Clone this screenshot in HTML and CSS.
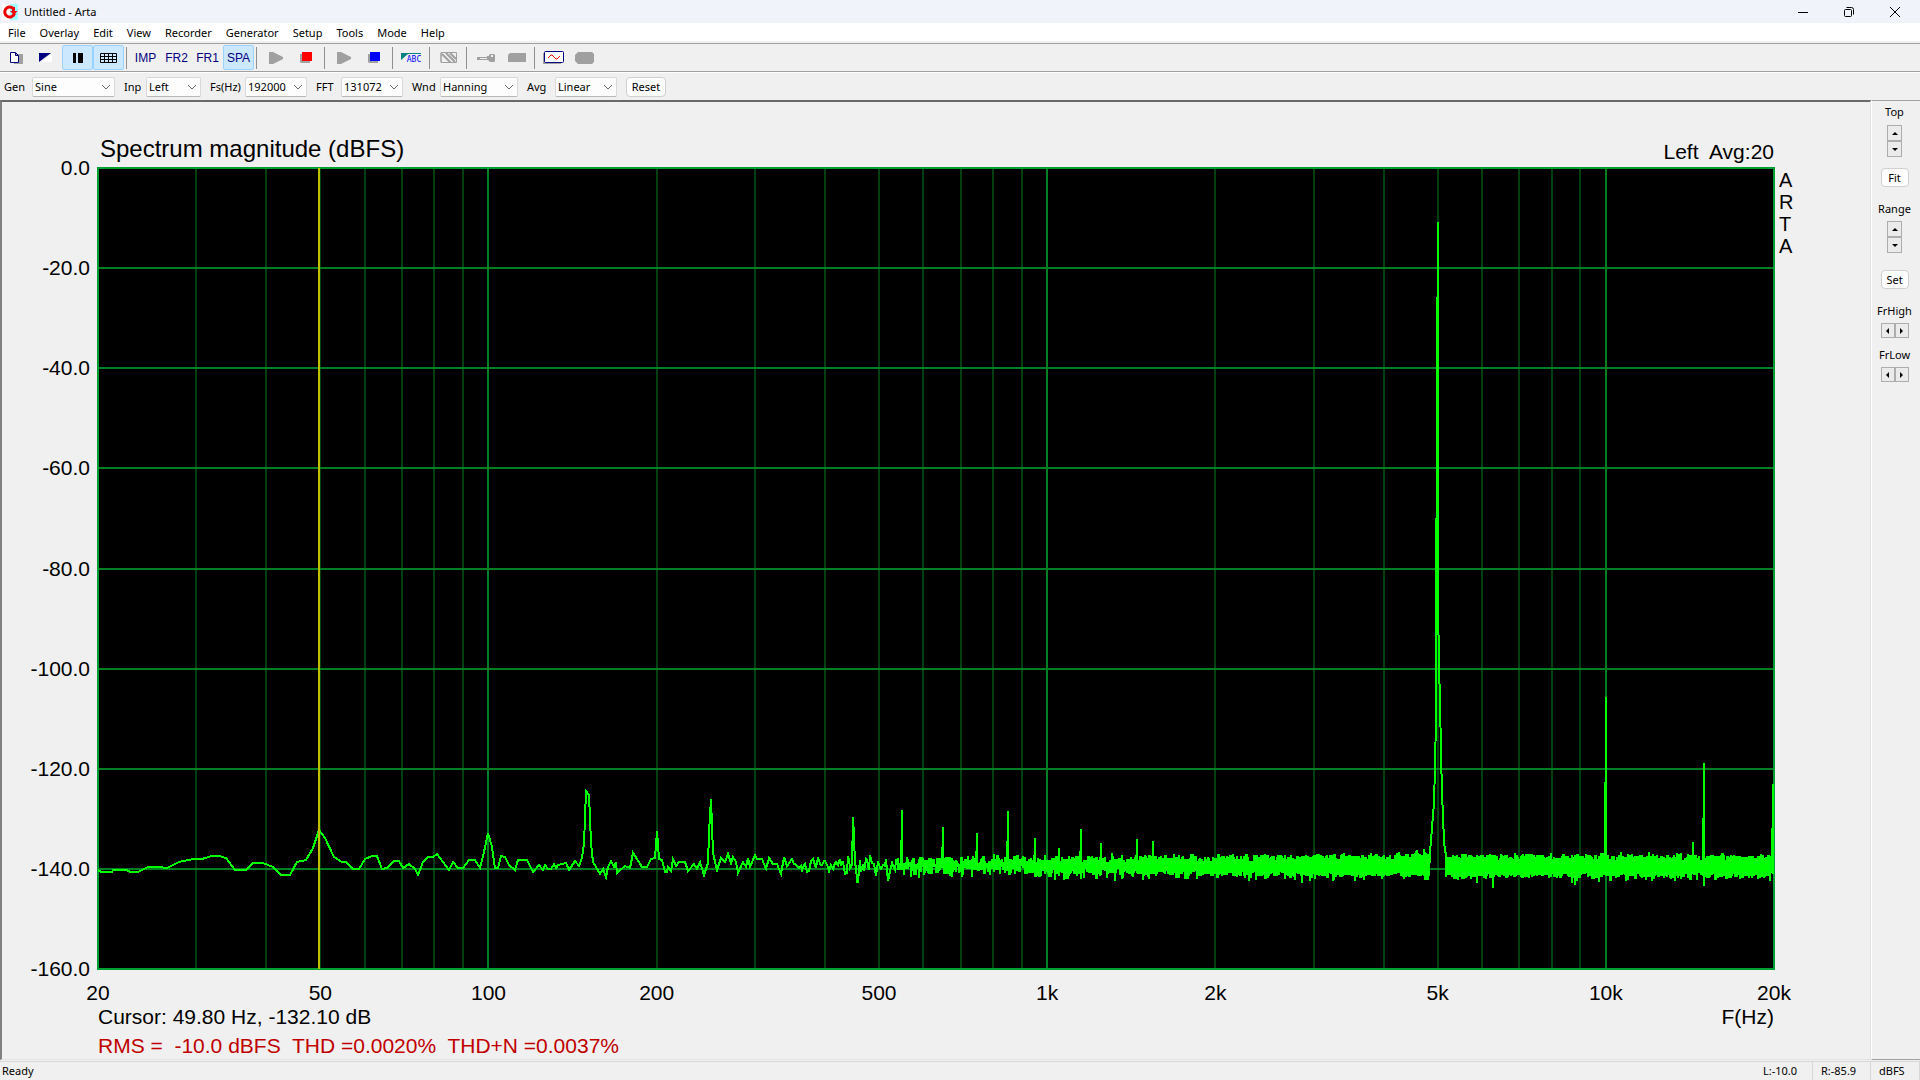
FILE: index.html
```html
<!DOCTYPE html>
<html lang="en">
<head>
<meta charset="utf-8">
<title>Untitled - Arta</title>
<link rel="stylesheet" href="styles.css">
</head>
<body>
<div class="window">
  <header class="titlebar">
    <svg class="app-icon" width="16" height="16" viewBox="0 0 16 16"><path fill="#fff" d="M0 0h8v16H0z"/><path fill="#a0ffff" d="M8 0h8v16H8z"/><path fill="none" stroke="#f00000" stroke-width="3" d="M11 4.200A5 5 0 1 0 12.500 9.500"/><path fill="#f00000" d="M8 7h7.500L12 11zM10 3h3v5h-3z"/></svg>
    <h1 class="app-title">Untitled - Arta</h1>
    <div class="window-buttons">
      <button type="button" aria-label="Minimize"><svg width="10" height="10" viewBox="0 0 10 10"><path d="M0 5.500h10"/></svg></button>
      <button type="button" aria-label="Restore"><svg width="10" height="10" viewBox="0 0 10 10"><rect x=".5" y="2.500" width="7" height="7" rx="1"/><path d="M2.500.5H7.500a2 2 0 0 1 2 2V7.500"/></svg></button>
      <button type="button" aria-label="Close"><svg width="10" height="10" viewBox="0 0 10 10"><path d="M0 0l10 10M10 0L0 10"/></svg></button>
    </div>
  </header>

  <nav class="menubar">
    <a href="#">File</a><a href="#">Overlay</a><a href="#">Edit</a><a href="#">View</a><a href="#">Recorder</a><a href="#">Generator</a><a href="#">Setup</a><a href="#">Tools</a><a href="#">Mode</a><a href="#">Help</a>
  </nav>

  <div class="toolbar" role="toolbar">
    <button type="button" aria-label="New"><svg width="14" height="14" viewBox="0 0 14 14"><path fill="#a0a0a0" d="M5 3h9v10H5z"/><path fill="#fff" stroke="#000080" d="M1.500 1.500h5l3 3v7h-8zM6.500 1.500v3h3"/></svg></button>
    <button type="button" aria-label="Overlay"><svg width="16" height="10" viewBox="0 0 16 10"><path fill="#fff" d="M13 0v9H3z"/><path fill="#000080" d="M0 0h12L0 9z"/></svg></button>
    <button type="button" class="on" aria-label="Pause"><svg width="12" height="10" viewBox="0 0 12 10"><path d="M1 0h3v10H1zM6 0h5v10H6z"/></svg></button>
    <button type="button" class="on" aria-label="Grid"><svg width="17" height="10" viewBox="0 0 17 10"><path fill="none" stroke="#000" d="M.5.5h16v9H.5zM0 3.500h17M0 6.500h17M4.500 0v10M8.500 0v10M12.500 0v10"/></svg></button>
    <span class="sep"></span>
    <button type="button">IMP</button>
    <button type="button">FR2</button>
    <button type="button">FR1</button>
    <button type="button" class="on">SPA</button>
    <span class="sep"></span>
    <button type="button" aria-label="Record"><svg width="14" height="12" viewBox="0 0 14 12"><path fill="#a0a0a0" d="M0 0h4l10 5v2L4 12H0z"/></svg></button>
    <button type="button" aria-label="Stop"><svg width="13" height="11" viewBox="0 0 13 11"><path fill="#a0a0a0" d="M0 2h10v9H1L0 10z"/><path fill="#f00" d="M2 0h10v9H2z"/></svg></button>
    <span class="sep"></span>
    <button type="button" aria-label="Generator start"><svg width="14" height="12" viewBox="0 0 14 12"><path fill="#a0a0a0" d="M0 0h4l10 5v2L4 12H0z"/></svg></button>
    <button type="button" aria-label="Generator stop"><svg width="13" height="11" viewBox="0 0 13 11"><path fill="#a0a0a0" d="M0 2h10v9H1L0 10z"/><path fill="#00f" d="M2 0h10v9H2z"/></svg></button>
    <span class="sep"></span>
    <button type="button" class="abc" aria-label="Title text"><svg width="21" height="12" viewBox="0 0 21 12"><path fill="#008080" d="M0 1h20v1H7L0 8z"/></svg><span>ABC</span></button>
    <span class="sep"></span>
    <button type="button" aria-label="Hatch"><svg width="17" height="11" viewBox="0 0 17 11"><path fill="none" stroke="#a0a0a0" d="M1 .5h15.500v10H1zM1 1v9"/><path fill="none" stroke="#a0a0a0" stroke-width="2" d="M2 2l9 9M6 1l9 9M10 1l6 6"/></svg></button>
    <span class="sep"></span>
    <button type="button" aria-label="Calibration"><svg width="18" height="8" viewBox="0 0 18 8"><path fill="#a0a0a0" d="M0 3h10V2h2V1l1-1h4l1 1v6l-1 1h-4L11 6H0z"/><path fill="#f0f0f0" d="M3 4h7v1H3zM14 1h2v2h-2z"/></svg></button>
    <button type="button" aria-label="Setup"><svg width="18" height="9" viewBox="0 0 18 9"><path fill="#a0a0a0" d="M2 0h16v9H0V2z"/></svg></button>
    <span class="sep"></span>
    <button type="button" aria-label="Generator setup"><svg width="21" height="13" viewBox="0 0 21 13"><path fill="#a0a0a0" d="M0 2h18v11H0z"/><rect x="1.500" y=".5" width="19" height="11" rx="1" fill="#fff" stroke="#000080"/><path fill="none" stroke="#f00" d="M5 7l3-3h1l4 4h1l3-3"/></svg></button>
    <button type="button" aria-label="Spectrum setup"><svg width="19" height="12" viewBox="0 0 19 12"><path fill="#a0a0a0" d="M3 0h14l2 2v8l-2 2H3l-3-3V3z"/></svg></button>
  </div>

  <form class="params">
    <label class="w28" for="gen">Gen</label><select id="gen" class="sel-l"><option>Sine</option></select>
    <label class="w22" for="inp">Inp</label><select id="inp" class="sel-s"><option>Left</option></select>
    <label class="w35" for="fs">Fs(Hz)</label><select id="fs" class="sel-m"><option>192000</option></select>
    <label class="w25" for="fft">FFT</label><select id="fft" class="sel-m"><option>131072</option></select>
    <label class="w28" for="wnd">Wnd</label><select id="wnd" class="sel-w"><option>Hanning</option></select>
    <label class="w28" for="avg">Avg</label><select id="avg" class="sel-m"><option>Linear</option></select>
    <button type="button" class="push">Reset</button>
  </form>

  <div class="body">
    <main class="pane">
      <div class="plot-head"><h2>Spectrum magnitude (dBFS)</h2><span>Left&nbsp; Avg:20</span></div>
      <div class="plot-y"><span>0.0</span><span>-20.0</span><span>-40.0</span><span>-60.0</span><span>-80.0</span><span>-100.0</span><span>-120.0</span><span>-140.0</span><span>-160.0</span></div>
      <svg class="plot" viewBox="0 0 1676 801" preserveAspectRatio="none" role="img" aria-label="Spectrum magnitude">
        <path id="minor" class="minor"/>
        <path id="major" class="major"/>
        <rect class="frame" x="0" y="0" width="1676" height="801"/>
        <path id="trace" class="trace"/>
        <path class="cursor" d="M221 0V801"/>
      </svg>
      <div class="plot-brand"><span>A</span><span>R</span><span>T</span><span>A</span></div>
      <div class="plot-x"><span>20</span><span>50</span><span>100</span><span>200</span><span>500</span><span>1k</span><span>2k</span><span>5k</span><span>10k</span><span>20k</span></div>
      <div class="plot-foot">
        <div class="readout"><span>Cursor: 49.80 Hz, -132.10 dB</span><span>F(Hz)</span></div>
        <div class="thd">RMS =&nbsp; -10.0 dBFS&nbsp; THD =0.0020%&nbsp; THD+N =0.0037%</div>
      </div>
    </main>

    <aside class="side">
      <div class="side-label">Top</div>
      <div class="spin"><button type="button" aria-label="Top up"><i class="up"></i></button><button type="button" aria-label="Top down"><i class="down"></i></button></div>
      <button type="button" class="push small">Fit</button>
      <div class="side-label">Range</div>
      <div class="spin range"><button type="button" aria-label="Range up"><i class="up"></i></button><button type="button" aria-label="Range down"><i class="down"></i></button></div>
      <button type="button" class="push small">Set</button>
      <div class="side-label">FrHigh</div>
      <div class="spin row"><button type="button" aria-label="High left"><i class="left"></i></button><button type="button" aria-label="High right"><i class="right"></i></button></div>
      <div class="side-label">FrLow</div>
      <div class="spin row"><button type="button" aria-label="Low left"><i class="left"></i></button><button type="button" aria-label="Low right"><i class="right"></i></button></div>
    </aside>
  </div>

  <footer class="status"><span class="ready">Ready</span><span class="cell">L:-10.0</span><span class="cell">R:-85.9</span><span class="cell unit">dBFS</span></footer>
</div>
<script src="plot.js"></script>
</body>
</html>
```
FILE: styles.css
```css
* { box-sizing: border-box; }
body { margin: 0; font: 11px/16px "Noto Sans", sans-serif; color: #000; background: #f0f0f0; }
h1, h2 { margin: 0; font-weight: 400; }
button { padding: 0; font: inherit; color: inherit; }

.window { display: flex; flex-direction: column; height: 100vh; }

.titlebar { display: flex; align-items: center; height: 23px; padding: 0 2px; background: #f0f3f9; }
.app-title { margin-left: 6px; font: 11px/16px "Noto Sans", sans-serif; }
.window-buttons { display: flex; margin-left: auto; }
.window-buttons button { display: flex; align-items: center; justify-content: center; width: 46px; height: 20px; border: 0; background: none; }
.window-buttons svg { fill: none; stroke: #000; overflow: visible; }

.menubar { display: flex; gap: 14px; height: 18px; padding-left: 8px; background: #fff; line-height: 20px; }
.menubar a { color: #000; text-decoration: none; }

.toolbar { display: flex; align-items: center; height: 31px; padding-top: 2px; border-top: 1px solid #f0f0f0; border-bottom: 1px solid #a0a0a0; background: linear-gradient(#a0a0a0, #a0a0a0) 0 1px / 100% 1px no-repeat; }
.toolbar button { display: flex; align-items: center; justify-content: center; width: 31px; height: 25px; border: 1px solid transparent; border-radius: 2px; background: none; color: #000080; font: 12px/16px "Liberation Sans", sans-serif; }
.toolbar .on { background: #cce8ff; border-color: #99d1ff; }
.sep { width: 6px; height: 22px; background: linear-gradient(#909090, #909090) 2px 0 / 1px 100% no-repeat; }
.toolbar .abc { display: grid; place-content: center; }
.abc svg, .abc span { grid-area: 1 / 1; }
.abc span { padding: 3px 0 0 5px; color: #00f; font: 8px/9px "DejaVu Sans Mono", monospace; }

.params { display: flex; align-items: center; height: 28px; padding: 0 0 0 4px; border-top: 1px solid #fff; }
.params select { height: 20px; margin-right: 9px; padding: 0 0 0 2px; font: 11px/16px "Noto Sans", sans-serif; color: #000; appearance: none; border: 1px solid #d8d8d8; border-bottom-color: #b8b8b8; border-radius: 2px; background: #fdfdfd url("data:image/svg+xml,%3Csvg xmlns='http://www.w3.org/2000/svg' width='10' height='6'%3E%3Cpath d='M1 1l4 4 4-4' fill='none' stroke='%23666'/%3E%3C/svg%3E") right 3px center no-repeat; }
.w22 { width: 22px; }
.w25 { width: 25px; }
.w28 { width: 28px; }
.w35 { width: 35px; }
.sel-s { width: 55px; }
.sel-m { width: 62px; }
.sel-w { width: 78px; }
.sel-l { width: 83px; }
.push { width: 40px; height: 20px; border: 1px solid #d0d0d0; border-radius: 4px; background: #fdfdfd; }
.push.small { width: 28px; height: 19px; }

.body { display: flex; flex: 1; min-height: 0; }
.pane { flex: 1; display: grid; grid-template: 66px 1fr 90px / 96px 1fr 96px; border-top: 2px solid #696969; border-left: 2px solid #808080; border-right: 1px solid #e3e3e3; border-bottom: 1px solid #e3e3e3; font: 21px/24px "Liberation Sans", sans-serif; }
.plot-head { grid-area: 1 / 2; display: flex; align-items: flex-end; justify-content: space-between; padding: 0 0 4px 2px; }
.plot-head h2 { font-size: 24px; line-height: 30px; }
.plot-y { grid-area: 2 / 1; display: flex; flex-direction: column; justify-content: space-between; margin: -12px 8px -12px 0; text-align: right; }
.plot { grid-area: 2 / 2; width: 100%; height: 100%; min-height: 0; background: #000; overflow: visible; shape-rendering: crispEdges; }
.plot path, .plot rect { fill: none; stroke-width: 2px; vector-effect: non-scaling-stroke; }
.plot .minor { stroke: #004010; }
.plot .major { stroke: #008020; }
.plot .frame { stroke: #00a030; }
.plot .trace { stroke: #0f0; }
.plot .cursor { stroke: #c0c000; }
.plot-brand { grid-area: 2 / 3; display: flex; flex-direction: column; padding: 1px 0 0 5px; font-size: 20px; line-height: 22px; }
.plot-x { grid-area: 3 / 2; display: grid; grid-template-columns: 398fr 301fr 301fr 398fr 301fr 301fr 398fr 301fr 301fr 0; padding-top: 12px; height: 36px; }
.plot-x span { display: flex; justify-content: center; width: 0; }
.plot-foot { grid-area: 3 / 2; margin-top: 36px; }
.readout { display: flex; justify-content: space-between; }
.thd { margin-top: 5px; color: #c00000; }

.side { display: flex; flex-direction: column; align-items: center; width: 49px; border-left: 1px solid #fff; border-top: 1px solid #a0a0a0; border-bottom: 1px solid #a0a0a0; padding: 3px 3px 0 0; }
.side-label { height: 16px; }
.spin { display: flex; flex-direction: column; width: 15px; margin: 5px 0 11px; }
.spin.range { margin: 4px 0 17px; }
.spin button { display: flex; align-items: center; justify-content: center; width: 15px; height: 16px; border: 1px solid #adadad; background: #ebebeb; }
.side .small + .side-label { margin-top: 14px; }
.spin.row { flex-direction: row; width: 28px; margin: 4px 0 9px; }
.spin.row button { width: 14px; height: 15px; }
.spin i { border: 3px solid transparent; }
.spin .up { border-bottom-color: #000; border-top: 0; }
.spin .down { border-top-color: #000; border-bottom: 0; }
.spin .left { border-right-color: #000; border-left: 0; }
.spin .right { border-left-color: #000; border-right: 0; }

.status { display: flex; height: 19px; margin-top: 1px; border-top: 1px solid #d7d7d7; line-height: 18px; }
.ready { flex: 1; padding-left: 2px; }
.cell { width: 58px; padding-left: 8px; border-right: 1px solid #d7d7d7; }
.cell.unit { width: 49px; }
```
FILE: plot.js
```js
(() => {
// Plot area units: 1676 x 801, 20 Hz..20 kHz (log), 0..-160 dBFS.
const W = 1676, H = 801;
const xOf = f => Math.round(W * Math.log10(f / 20) / 3);

let minor = '', major = '';
for (const d of [10, 100, 1000, 10000]) {
  for (let k = 1; k < 10; k++) {
    const f = d * k;
    if (f <= 20 || f >= 20000) continue;
    if (k === 1) major += `M${xOf(f)} 0V${H}`;
    else minor += `M${xOf(f)} 0V${H}`;
  }
}
for (let i = 1; i < 8; i++) major += `M0 ${Math.round(H * i / 8)}H${W}`;
document.getElementById('minor').setAttribute('d', minor);
document.getElementById('major').setAttribute('d', major);

// Low-frequency bins, wide enough apart to be seen one by one.
const bins = [
  0,702,3,704,14,704,15,702,29,702,32,704,40,704,50,699,60,699,69,700,81,694,95,691,104,691,114,688,121,688,
  128,690,137,702,148,702,155,695,165,695,175,699,183,707,192,707,199,694,208,692,215,680,221,662,227,670,
  236,689,244,694,248,694,255,701,261,701,267,691,274,688,279,688,284,701,289,700,296,693,301,693,305,700,
  311,696,317,701,320,707,325,694,330,689,335,689,339,686,345,694,351,702,355,694,360,700,365,700,371,692,
  377,692,382,700,386,684,390,665,394,679,397,700,400,700,403,688,407,689,411,697,417,702,420,692,429,692,
  435,704,441,697,445,702,447,697,450,701,453,701,456,696,458,700,460,697,468,695,471,702,477,693,481,698,
  484,690,486,676,488,623,491,627,493,675,495,694,498,699,502,706,505,701,508,709,510,699,
  513,693,516,699,518,694,519,705,522,702,527,698,532,700,535,685,539,691,544,699,549,699,553,691,557,690,
  559,663,561,691,564,692,567,704,569,704,570,699,573,703,575,691,578,698,581,694,587,694,590,703,596,696,
  599,701,602,694,606,707,610,695,611,665,613,631,615,685,619,702,623,690,627,694,630,686,633,695,635,689,
  638,694,640,705,645,694,648,699,650,690,652,699,657,687,659,691,664,691,668,701,671,690,675,696,679,696,
  683,706,686,689,689,698,694,691
];
let d = 'M';
for (let i = 0; i < bins.length; i += 2) d += `${bins[i]} ${bins[i + 1]} `;

// Harmonics standing out of the noise floor, and the deepest dips.
const spikes = { 755: 649, 804: 642, 845: 659, 879: 665, 910: 643, 937: 670, 961: 680, 983: 661, 1003: 675,
  1039: 671, 1055: 673, 1508: 529, 1595: 674, 1606: 595, 1675: 616 };
const dips = { 760: 714, 790: 713, 821: 710, 966: 712, 1151: 713, 1235: 713, 1395: 720, 1477: 717, 1606: 718 };
const peak = [1332,684,1334,660,1336,635,1337,599,1338,550,1338,502,1339,210,1340,54,1340,430,1341,502,1342,530,
  1343,587,1344,624,1345,649,1346,672,1347,684];

let seed = 7;
const rnd = () => (seed = (seed * 16807) % 2147483647) / 2147483647;

// Bins close up here: one point every other column, then several per column.
let x = 696;
while (x < 800) {
  if (spikes[x] || spikes[x + 1]) {
    const s = spikes[x] ? x : x + 1;
    d += `${s - 1} 697 ${s} ${spikes[s]} ${s + 1} ${spikes[s] + 18} ${s + 2} 697 `;
    x = s + 3;
    continue;
  }
  const y = dips[x] || dips[x + 1] || 697 + (rnd() + rnd() - 1) * 12;
  d += `${x} ${Math.round(y)} `;
  x += rnd() < 0.5 ? 1 : 2;
}

// From here every column holds many bins: draw its highest and lowest.
for (let high = 692, low = 702; x < W; x++) {
  if (x === 1332) {
    for (let i = 0; i < peak.length; i += 2) d += `${peak[i]} ${peak[i + 1]} `;
    x = 1347;
    continue;
  }
  const fill = Math.min(1, (x - 800) / 450);
  if (rnd() < 0.7) high = 698 - 6 * fill - rnd() * (9 - 4 * fill) - rnd() * rnd() * 4;
  if (rnd() < 0.7) low = Math.max(high + 3, 699 + 7 * fill + (rnd() - 0.4) * (9 - 6 * fill) + rnd() * rnd() * 8);
  const rise = x > 1300 && x < 1332 ? (x - 1300) / 8 : 0;
  d += `${x} ${Math.round(spikes[x] || high - rise)} ${x} ${Math.round(dips[x] || low)} `;
}
document.getElementById('trace').setAttribute('d', d);
})();
```
